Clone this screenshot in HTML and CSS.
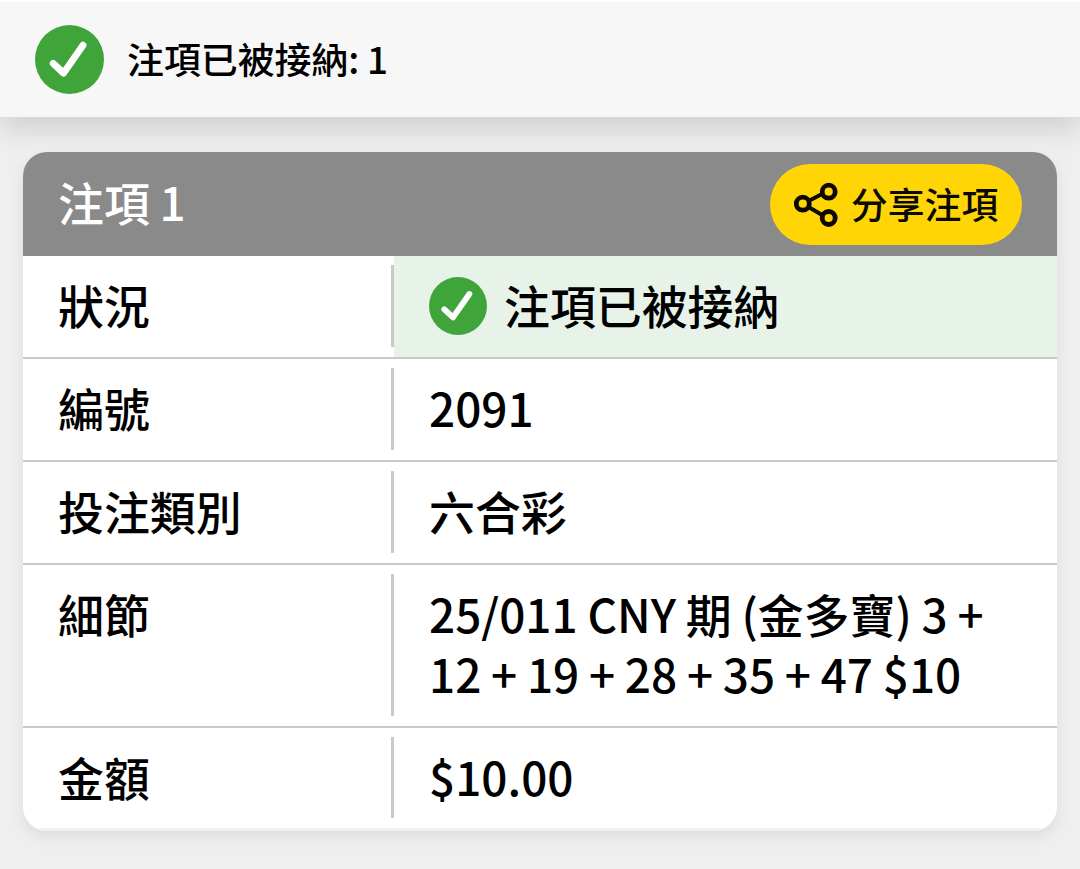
FILE: index.html
```html
<!DOCTYPE html>
<html lang="zh-HK">
<head>
    <meta charset="UTF-8">
    <title>注項已被接納</title>
    <link rel="stylesheet" href="styles.css">
</head>
<body>
    <div class="top-bar">
        <svg class="top-icon" viewBox="0 0 70 70">
            <circle cx="35" cy="35" r="35" fill="#3fa43a"/>
            <path d="M18.5 39 L29 48.8 L48.7 20.5" fill="none" stroke="#fff" stroke-width="7" stroke-linecap="round" stroke-linejoin="round"/>
        </svg>
        <span>注項已被接納: 1</span>
    </div>

    <div class="bet-card">
        <div class="bet-header">
            <span>注項 1</span>
            <button class="share-btn" type="button">
                <svg class="share-icon" viewBox="0 0 46 46" fill="none" stroke="#0c0900" stroke-width="4.8">
                    <path d="M14.5 20 L29 12.5 M14.5 26 L29 34.5" stroke-width="4"/>
                    <circle cx="8.8" cy="22.7" r="6.5"/>
                    <circle cx="34.7" cy="10.7" r="6.5"/>
                    <circle cx="34.7" cy="37" r="6.5"/>
                </svg>
                <span>分享注項</span>
            </button>
        </div>

        <div class="row">
            <div class="label">狀況</div>
            <div class="value accepted">
                <svg class="status-icon" viewBox="0 0 70 70">
                    <circle cx="35" cy="35" r="35" fill="#3fa43a"/>
                    <path d="M18.5 39 L29 48.8 L48.7 20.5" fill="none" stroke="#fff" stroke-width="7" stroke-linecap="round" stroke-linejoin="round"/>
                </svg>
                <span>注項已被接納</span>
            </div>
        </div>
        <div class="row">
            <div class="label">編號</div>
            <div class="value">2091</div>
        </div>
        <div class="row">
            <div class="label">投注類別</div>
            <div class="value">六合彩</div>
        </div>
        <div class="row">
            <div class="label">細節</div>
            <div class="value">25/011 CNY 期 (金多寶) 3 +<br>12 + 19 + 28 + 35 + 47 $10</div>
        </div>
        <div class="row">
            <div class="label">金額</div>
            <div class="value">$10.00</div>
        </div>
    </div>
</body>
</html>
```
FILE: styles.css
```css
* {
    box-sizing: border-box;
}
body {
    margin: 0;
    height: 869px;
    overflow: hidden;
    background-color: #efefef;
    color: #000;
    font-family: "Noto Sans CJK TC", sans-serif;
    font-weight: 500;
    font-size: 45.9px;
    line-height: 60px;
    word-spacing: -0.6px;
}
.top-bar {
    display: flex;
    align-items: center;
    gap: 23px;
    height: 117px;
    padding-left: 35px;
    border-top: 2px solid #fff;
    background-color: #f7f7f7;
    box-shadow: 0 14px 24px rgba(0, 0, 0, 0.12);
    font-size: 36.9px;
}
.top-bar span {
    padding-bottom: 4px;
}
.top-icon {
    width: 69px;
    height: 69px;
}
.bet-card {
    margin: 35px 23px 0;
    border-radius: 24px;
    background-color: #fff;
    overflow: hidden;
    box-shadow: 0 6px 16px rgba(0, 0, 0, 0.08);
}
.bet-header {
    display: flex;
    align-items: center;
    justify-content: space-between;
    height: 104px;
    padding: 0 35px;
    background-color: #8a8a8a;
    color: #fff;
}
.bet-header > span {
    padding-bottom: 6px;
}
.share-btn {
    display: flex;
    align-items: center;
    gap: 11px;
    width: 252px;
    height: 81px;
    padding: 0 0 0 24px;
    border: none;
    border-radius: 41px;
    background-color: #ffd506;
    color: #0c0900;
    font: inherit;
    font-size: 36.8px;
    line-height: 60px;
}
.share-btn span {
    padding-bottom: 3px;
}
.share-icon {
    width: 46px;
    height: 46px;
}
.row {
    display: flex;
    border-bottom: 2px solid #c9c9c9;
}
.row:last-child {
    border-bottom: 3px solid #f1f1f1;
}
.row:last-child > div {
    padding-bottom: 22px;
}
.label {
    width: 371px;
    padding: 18px 0 23px 35px;
    /* short divider, does not touch the row lines */
    background: linear-gradient(#c9c9c9, #c9c9c9) no-repeat right 9px / 3px calc(100% - 19px);
}
.value {
    flex: 1;
    padding: 18px 0 23px 35px;
}
.accepted {
    display: flex;
    align-items: center;
    gap: 17px;
    padding: 0 0 1px 35px;
    background-color: #e7f3e8;
}
.accepted span {
    padding-bottom: 4px;
}
.status-icon {
    width: 58px;
    height: 58px;
}
```
